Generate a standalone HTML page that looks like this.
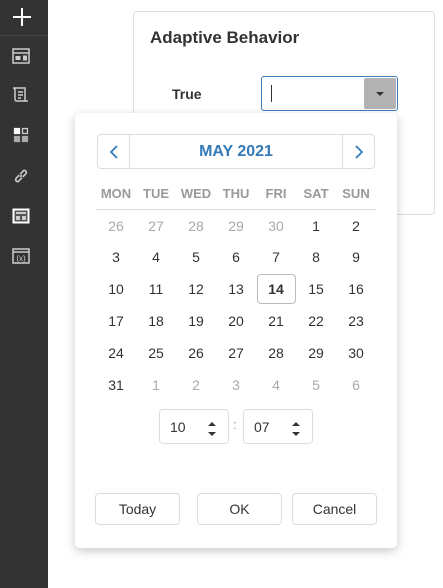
<!DOCTYPE html>
<html><head><meta charset="utf-8"><style>
*{box-sizing:border-box;margin:0;padding:0}
body{width:443px;height:588px;background:#fff;font-family:"Liberation Sans",Arial,sans-serif;position:relative;overflow:hidden;color:#333}
.side{position:absolute;left:0;top:0;width:48px;height:588px;background:#333}
.side .top{height:36px;border-bottom:1px solid #3c4650;position:relative}
.ic{position:absolute;left:12px;width:18px;height:16px}
.card{position:absolute;left:133px;top:11px;width:302px;height:204px;border:1px solid #ddd;border-radius:4px}
.card h1{position:absolute;left:16px;top:16px;font-size:17px;font-weight:bold;color:#333}
.lbl{position:absolute;left:38px;top:74px;font-size:14px;font-weight:bold;color:#333}
.inp{position:absolute;left:261px;top:76px;width:137px;height:35px;border:1px solid #3d7ab8;border-radius:3px}
.inp .caret{position:absolute;left:9px;top:8px;width:1px;height:17px;background:#333}
.inp .dd{position:absolute;right:1px;top:1px;width:32px;height:31px;background:#b3b3b3;border-radius:2px}
.inp .dd:after{content:"";position:absolute;left:12px;top:14px;border-left:4px solid transparent;border-right:4px solid transparent;border-top:4px solid #333}
.pop{position:absolute;left:75px;top:113px;width:322px;height:435px;background:#fff;border-radius:5px;box-shadow:0 3px 10px rgba(0,0,0,.22)}
.nav{position:absolute;left:22px;top:21px;width:278px;height:35px;border:1px solid #ddd;border-radius:4px}
.nav .p{position:absolute;left:0;top:0;width:32px;height:33px;border-right:1px solid #ddd}
.nav .n{position:absolute;right:0;top:0;width:32px;height:33px;border-left:1px solid #ddd}
.nav .t{position:absolute;left:32px;right:32px;top:8px;text-align:center;color:#337ab7;font-weight:bold;font-size:16px}
.g{position:absolute;font-size:14px;text-align:center;width:40px}
.hd{font-weight:bold;color:#999;font-size:13px}
.line{position:absolute;left:21px;top:96px;width:280px;height:1px;background:#ddd}
.o{color:#aaa}
.sel{position:absolute;left:182px;top:161px;width:39px;height:30px;border:1px solid #bbb;border-radius:4px}
.tb{position:absolute;top:296px;width:70px;height:35px;border:1px solid #ddd;border-radius:4px;font-size:14px}
.tb span{position:absolute;left:10px;top:9px}
.up,.dn{position:absolute;left:48px;border-left:4px solid transparent;border-right:4px solid transparent}
.up{top:12px;border-bottom:4px solid #333}.dn{top:22px;border-top:4px solid #333}
.btn{position:absolute;top:380px;width:85px;height:32px;border:1px solid #ddd;border-radius:4px;font-size:14px;text-align:center;line-height:30px;color:#333}
</style></head><body>
<div class="side">
<div class="top"><svg style="position:absolute;left:12px;top:7px" width="20" height="20"><path d="M10 1V19M1 10H19" stroke="#fff" stroke-width="2"/></svg></div>
<svg class="ic" style="top:48px" viewBox="0 0 18 16"><rect x="1" y="1" width="16" height="14" fill="none" stroke="#ccc" stroke-width="1.5"/><path d="M1 5H17" stroke="#ccc" stroke-width="1.5"/><rect x="3.5" y="8" width="5" height="4" fill="#ccc"/><rect x="11" y="7.5" width="4" height="5" fill="#ccc"/></svg>
<svg class="ic" style="top:87px" viewBox="0 0 18 16"><path d="M3 1H13V14H5Q3 14 3 12V3Q3 1 1 1H3M13 14H16" fill="none" stroke="#ccc" stroke-width="1.5"/><path d="M6 5H11M6 8H11M6 11H9" stroke="#ccc" stroke-width="1.5"/></svg>
<svg class="ic" style="top:127px" viewBox="0 0 18 18"><rect x="1" y="1" width="7" height="7" fill="#fff"/><rect x="10" y="1" width="7" height="7" fill="#ccc"/><rect x="11.5" y="2.5" width="4" height="4" fill="#333"/><rect x="1" y="10" width="7" height="7" fill="#aaa"/><rect x="10" y="10" width="7" height="7" fill="#aaa"/></svg>
<svg class="ic" style="top:168px" viewBox="0 0 18 18"><path d="M8 10L10 8M7 8L4 11Q2 13 4 15Q6 16 7 14L10 11M11 10L14 7Q16 5 14 3Q12 2 11 4L8 7" fill="none" stroke="#ccc" stroke-width="1.8"/></svg>
<svg class="ic" style="top:208px" viewBox="0 0 18 16"><rect x="0.5" y="0.5" width="17" height="15" fill="#fff"/><rect x="2.5" y="2.5" width="13" height="11" fill="#555"/><rect x="4" y="4" width="10" height="2" fill="#ccc"/><rect x="4" y="8" width="4" height="4" fill="#ccc"/><rect x="10" y="8" width="4" height="4" fill="#ccc"/></svg>
<svg class="ic" style="top:248px" viewBox="0 0 18 16"><rect x="1" y="1" width="16" height="14" fill="none" stroke="#ccc" stroke-width="1.5"/><path d="M1 4H17" stroke="#ccc" stroke-width="1.5"/><text x="9" y="13" font-size="8" fill="#ccc" text-anchor="middle" font-family="Liberation Sans">(x)</text></svg>
</div>
<div class="card"><h1>Adaptive Behavior</h1><div class="lbl">True</div></div>
<div class="inp"><div class="caret"></div><div class="dd"></div></div>
<div class="pop">
<div class="nav"><div class="p"><svg width="32" height="33"><path d="M19 11L13 17L19 23" fill="none" stroke="#337ab7" stroke-width="1.8"/></svg></div><div class="t">MAY 2021</div><div class="n"><svg width="32" height="33"><path d="M13 11L19 17L13 23" fill="none" stroke="#337ab7" stroke-width="1.8"/></svg></div></div>
<div class="line"></div>
<div class="sel"></div>
<div id="cal"></div>
<div class="tb" style="left:84px"><span>10</span><i class="up"></i><i class="dn"></i></div>
<div style="position:absolute;left:158px;top:304px;color:#999;font-size:13px">:</div>
<div class="tb" style="left:168px"><span>07</span><i class="up"></i><i class="dn"></i></div>
<div class="btn" style="left:20px">Today</div>
<div class="btn" style="left:122px">OK</div>
<div class="btn" style="left:217px">Cancel</div>
<div class="g hd" style="left:21px;top:73px">MON</div><div class="g hd" style="left:61px;top:73px">TUE</div><div class="g hd" style="left:101px;top:73px">WED</div><div class="g hd" style="left:141px;top:73px">THU</div><div class="g hd" style="left:181px;top:73px">FRI</div><div class="g hd" style="left:221px;top:73px">SAT</div><div class="g hd" style="left:261px;top:73px">SUN</div>
<div class="g o" style="left:21px;top:105px">26</div><div class="g o" style="left:61px;top:105px">27</div><div class="g o" style="left:101px;top:105px">28</div><div class="g o" style="left:141px;top:105px">29</div><div class="g o" style="left:181px;top:105px">30</div><div class="g" style="left:221px;top:105px">1</div><div class="g" style="left:261px;top:105px">2</div>
<div class="g" style="left:21px;top:136px">3</div><div class="g" style="left:61px;top:136px">4</div><div class="g" style="left:101px;top:136px">5</div><div class="g" style="left:141px;top:136px">6</div><div class="g" style="left:181px;top:136px">7</div><div class="g" style="left:221px;top:136px">8</div><div class="g" style="left:261px;top:136px">9</div>
<div class="g" style="left:21px;top:168px">10</div><div class="g" style="left:61px;top:168px">11</div><div class="g" style="left:101px;top:168px">12</div><div class="g" style="left:141px;top:168px">13</div><div class="g" style="left:181px;top:168px;font-weight:bold">14</div><div class="g" style="left:221px;top:168px">15</div><div class="g" style="left:261px;top:168px">16</div>
<div class="g" style="left:21px;top:200px">17</div><div class="g" style="left:61px;top:200px">18</div><div class="g" style="left:101px;top:200px">19</div><div class="g" style="left:141px;top:200px">20</div><div class="g" style="left:181px;top:200px">21</div><div class="g" style="left:221px;top:200px">22</div><div class="g" style="left:261px;top:200px">23</div>
<div class="g" style="left:21px;top:232px">24</div><div class="g" style="left:61px;top:232px">25</div><div class="g" style="left:101px;top:232px">26</div><div class="g" style="left:141px;top:232px">27</div><div class="g" style="left:181px;top:232px">28</div><div class="g" style="left:221px;top:232px">29</div><div class="g" style="left:261px;top:232px">30</div>
<div class="g" style="left:21px;top:264px">31</div><div class="g o" style="left:61px;top:264px">1</div><div class="g o" style="left:101px;top:264px">2</div><div class="g o" style="left:141px;top:264px">3</div><div class="g o" style="left:181px;top:264px">4</div><div class="g o" style="left:221px;top:264px">5</div><div class="g o" style="left:261px;top:264px">6</div>
</div>
</body></html>
